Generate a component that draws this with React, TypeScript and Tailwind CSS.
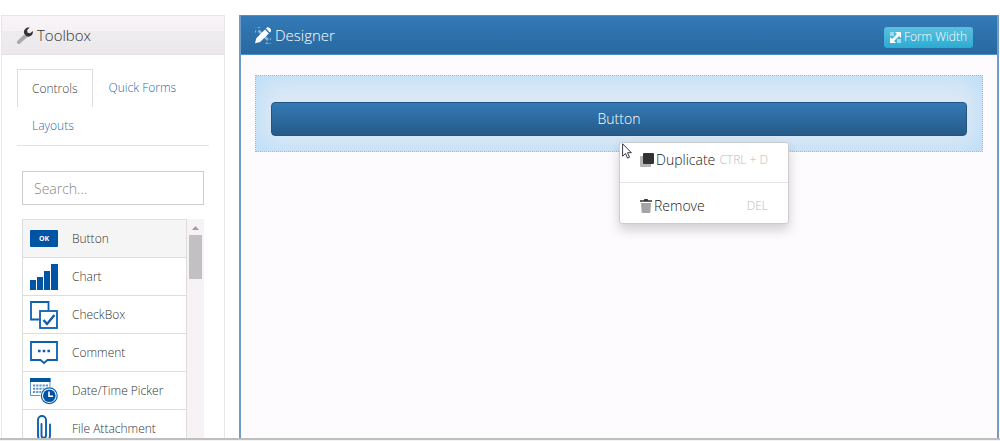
import React, { useState } from 'react';

const ButtonIcon = () => (
    <svg width="28" height="28" viewBox="0 0 28 28">
        <rect y="5" width="28" height="17" rx="1" fill="#0054a6" />
        <text x="14" y="16" fill="#fff" fontSize="7" fontWeight="700" textAnchor="middle">OK</text>
    </svg>
);

const ChartIcon = () => (
    <svg width="28" height="28" viewBox="0 0 28 28" fill="#0054a6">
        <rect y="17" width="6" height="10" />
        <rect x="7" y="14" width="6" height="13" />
        <rect x="14" y="8" width="6" height="19" />
        <rect x="21" y="1" width="7" height="26" />
    </svg>
);

const CheckBoxIcon = () => (
    <svg width="28" height="28" viewBox="0 0 28 28" fill="none" stroke="#0e5fae" strokeWidth="1.8">
        <path d="M9 18.5H1V1h17.5v8" />
        <rect x="10" y="10" width="17" height="17" />
        <path d="M13.5 19l3.5 4 7.500-9" strokeWidth="2.4" />
    </svg>
);

const CommentIcon = () => (
    <svg width="28" height="28" viewBox="0 0 28 28" fill="none" stroke="#0e5fae" strokeWidth="1.8">
        <path d="M1 3h26v18H17.500L14 24l-3.500-3H1z" />
        <path d="M8 12h2.600M12.700 12h2.600M17.400 12H20" strokeWidth="2.600" />
    </svg>
);

const DateIcon = () => (
    <svg width="28" height="28" viewBox="0 0 28 28">
        <path d="M.5 1.500h19.500v17H.5z" fill="#fff" stroke="#5a94cb" />
        <path d="M0 1h20.500v4H0z" fill="#0054a6" />
        <path d="M3 8.500h15M3 11.700h15M3 15h10" stroke="#5a94cb" strokeWidth="2" strokeDasharray="2.200 1" />
        <circle cx="19.300" cy="18.700" r="9" fill="#fff" />
        <circle cx="19.300" cy="18.700" r="7.900" fill="#fff" stroke="#0e5fae" strokeWidth="1.200" />
        <circle cx="19.300" cy="18.700" r="6.300" fill="#0054a6" />
        <path d="M19 14.500v4.700h4" fill="none" stroke="#fff" strokeWidth="1.600" />
    </svg>
);

const ClipIcon = () => (
    <svg width="28" height="28" viewBox="0 0 28 28" fill="none" stroke="#0e5fae" strokeWidth="1.900" strokeLinecap="round">
        <path d="M16 8v12.500a2 2 0 0 1-4.500 0V9M16 8V5a4 4 0 0 0-8 0v15.500a6 6 0 0 0 12 0V9.500" />
    </svg>
);

const WrenchIcon = () => (
    <svg width="16" height="17" viewBox="0 0 16 17">
        <path d="M1.800 15.200L9 8.500" stroke="#aaa" strokeWidth="3.800" strokeLinecap="round" />
        <path d="M12.800.6a4.600 4.600 0 0 0-5.600 6L9.600 9.300a4.600 4.600 0 0 0 6.200-5.300l-2.600 2.200-2.600-.5-.5-2.600z" fill="#333" />
    </svg>
);

const DesignIcon = () => (
    <svg width="16" height="17" viewBox="0 0 16 17">
        <path d="M3.500 3.500l9.500 9.500" stroke="#87b3d8" strokeWidth="2.600" />
        <path d="M4.500.8a3 3 0 1 0-3.500 4M15.200 11.800a3 3 0 1 1-3.800 3.600" fill="none" stroke="#87b3d8" strokeWidth="2" />
        <path d="M0 16.300l1.300-5L10 2.600l3.800 3.800-8.700 8.600zM11 1.600l1-1c1.500-1.500 5.300 2 3.800 3.800l-1 1z" fill="#fff" />
    </svg>
);

const ExpandIcon = () => (
    <svg width="11" height="11" viewBox="0 0 11 11">
        <path d="M0 0h4v4H0zM7 7h4v4H7z" fill="#9edcec" />
        <path d="M5 0h6v6L9 4 4 9l2 2H0V5l2 2 5-5z" fill="#fff" />
    </svg>
);

const DuplicateIcon = () => (
    <svg width="14" height="14" viewBox="0 0 14 14">
        <rect y="3" width="11" height="11" rx="1" fill="#b5b5b5" />
        <rect x="3" width="11" height="11" rx="1" fill="#333" />
    </svg>
);

const TrashIcon = () => (
    <svg width="12" height="14" viewBox="0 0 12 14">
        <path d="M1 4h10l-.6 9q0 1-1 1H2.600q-1 0-1-1z" fill="#a5a5a5" />
        <path d="M0 1.200h3.800L4.500 0h3l.7 1.200H12v1.600H0z" fill="#333" />
    </svg>
);

const CONTROLS = [
    { name: 'Button', Icon: ButtonIcon },
    { name: 'Chart', Icon: ChartIcon },
    { name: 'CheckBox', Icon: CheckBoxIcon },
    { name: 'Comment', Icon: CommentIcon },
    { name: 'Date/Time Picker', Icon: DateIcon },
    { name: 'File Attachment', Icon: ClipIcon },
];

const Toolbox: React.FC = () => {
    const [search, setSearch] = useState('');
    const items = CONTROLS.filter((c) => c.name.toLowerCase().includes(search.toLowerCase()));

    return (
        <aside className="w-56 shrink-0 border border-b-0 border-[#e7e5e7] bg-white">
            <h2 className="flex h-[39px] items-center gap-1 border-b border-[#e4e2e4] bg-[linear-gradient(#f8f4f8,#f5f1f5_40%,#eeedee_40%,#ece8ec)] px-[15px] text-[15px]">
                <WrenchIcon />
                Toolbox
            </h2>
            <div className="px-[15px] pt-[14px]">
                <nav className="flex flex-wrap border-b border-[#e3e3e3] text-xs">
                    <a href="#controls" className="flex h-[38px] items-center border border-b-0 border-[#ddd] px-[14px] text-[#444]">Controls</a>
                    <a href="#quick-forms" className="flex h-[38px] items-center px-4 text-[#1f6cb0]">Quick Forms</a>
                    <a href="#layouts" className="flex h-[38px] items-center px-[15px] text-[#1f6cb0]">Layouts</a>
                </nav>
            </div>
            <div className="px-5 pt-[25px]">
                <input
                    type="text"
                    aria-label="Search"
                    placeholder="Search..."
                    value={search}
                    onChange={(e) => setSearch(e.target.value)}
                    className="block h-[34px] w-full border border-[#ccc] px-[11px] text-sm outline-none placeholder:text-[#888]"
                />
                <div className="mt-[14px] flex">
                    <ul className="flex-1 border border-[#ddd] text-xs">
                        {items.map(({ name, Icon }) => (
                            <li key={name} className="border-b border-[#ddd] first:bg-[#f5f5f5]">
                                <button type="button" className="flex h-[37px] w-full items-center gap-[14px] px-[7px] text-left">
                                    <Icon />
                                    {name}
                                </button>
                            </li>
                        ))}
                    </ul>
                    {/* scroll track */}
                    <div className="flex w-[17px] flex-col items-center bg-[#f6f2f6] pt-[7px]">
                        <svg width="7" height="4" viewBox="0 0 7 4" fill="#a09da0"><path d="M0 4l3.500-4L7 4z" /></svg>
                        <div className="mt-[5px] h-11 w-[13px] bg-[#c3c0c3]" />
                    </div>
                </div>
            </div>
        </aside>
    );
};

const ContextMenu: React.FC = () => (
    <div className="absolute top-[40px] left-1/2 w-[170px] rounded-[3px] border border-[#ccc] bg-white text-[#222] shadow-[0_6px_12px_rgba(0,0,0,0.175)]">
        <button type="button" className="flex h-10 w-full items-center gap-[2px] border-b border-[#e5e5e5] px-5 pb-[5px] text-sm">
            <DuplicateIcon />
            Duplicate
            <span className="ml-auto text-xs whitespace-nowrap text-[#bbb]">CTRL + D</span>
        </button>
        <button type="button" className="flex h-10 w-full items-center gap-[2px] px-5 pt-[5px] text-sm">
            <TrashIcon />
            Remove
            <span className="ml-auto text-xs text-[#bbb]">DEL</span>
        </button>
        {/* mouse pointer */}
        <svg className="absolute top-0 left-[2px]" width="10" height="16" viewBox="0 0 10 16">
            <path d="M.6.8v12.400l2.900-2.700 2 4.600 2-.9-2-4.500h3.900z" fill="#fff" stroke="#223" strokeWidth=".9" />
        </svg>
    </div>
);

const Designer: React.FC = () => (
    <main className="min-w-0 flex-1 border-x-2 border-[#6d9dc7] bg-[#fefbff]">
        <header className="flex h-10 items-center justify-between border-y border-[#5090c4] bg-linear-to-b from-[#337ab7] to-[#2869a0] pr-6 pl-[14px] text-white">
            <h2 className="flex items-center gap-1 text-[15px]">
                <DesignIcon />
                Designer
            </h2>
            <button type="button" className="mt-1 flex h-[21px] items-center gap-[3px] rounded-[3px] bg-linear-to-b from-[#5bc0de] to-[#2aabd2] px-[6px] text-xs">
                <ExpandIcon />
                Form Width
            </button>
        </header>
        <div className="mx-[14px] mt-5 border border-dotted border-[#a3b4c4] bg-[#dde9f6] px-[15px] pt-[26px] pb-[15px] shadow-[inset_0_0_30px_#b3dbf7]">
            <div className="relative">
                <button type="button" className="h-[34px] w-full rounded border border-[#245580] bg-linear-to-b from-[#337ab7] to-[#265a88] text-sm text-white">
                    Button
                </button>
                <ContextMenu />
            </div>
        </div>
    </main>
);

export default function App() {
    return (
        <div className="h-screen overflow-hidden bg-[#f4f4f4] font-['Open_Sans',sans-serif] font-light text-[#333]">
            <div className="flex h-[calc(100%-1px)] gap-[14px] overflow-hidden border-b-2 border-[#bfbfbf] bg-white pt-[15px] pr-px pl-px">
                <Toolbox />
                <Designer />
            </div>
        </div>
    );
}
